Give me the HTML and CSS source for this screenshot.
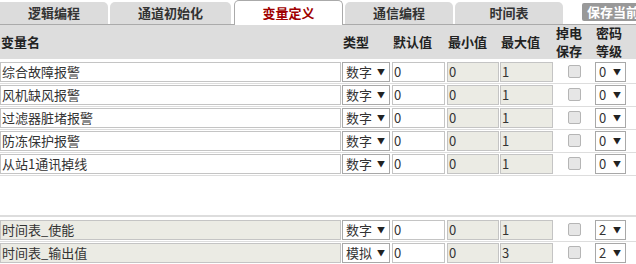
FILE: index.html
```html
<!DOCTYPE html>
<html>
<head>
    <link rel="stylesheet" href="styles.css">
</head>
<body>

    <nav class="tabs">
        <div class="tab first">逻辑编程</div>
        <div class="tab">通道初始化</div>
        <div class="tab active">变量定义</div>
        <div class="tab">通信编程</div>
        <div class="tab">时间表</div>
        <div class="save">保存当前设置</div>
    </nav>

    <div class="head">
        <div class="c-name">变量名</div>
        <div class="c-type">类型</div>
        <div class="c-def">默认值</div>
        <div class="c-min">最小值</div>
        <div class="c-max">最大值</div>
        <div class="c-chk">掉电<br>保存</div>
        <div class="c-lvl">密码<br>等级</div>
    </div>

    <section class="rows">
        <div class="row">
            <div class="c-name box">综合故障报警</div>
            <div class="c-type box sel">数字<span>▼</span></div>
            <div class="c-def box">0</div>
            <div class="c-min box off">0</div>
            <div class="c-max box off">1</div>
            <div class="c-chk"><span class="check"></span></div>
            <div class="c-lvl box sel">0<span>▼</span></div>
        </div>
        <div class="row">
            <div class="c-name box">风机缺风报警</div>
            <div class="c-type box sel">数字<span>▼</span></div>
            <div class="c-def box">0</div>
            <div class="c-min box off">0</div>
            <div class="c-max box off">1</div>
            <div class="c-chk"><span class="check"></span></div>
            <div class="c-lvl box sel">0<span>▼</span></div>
        </div>
        <div class="row">
            <div class="c-name box">过滤器脏堵报警</div>
            <div class="c-type box sel">数字<span>▼</span></div>
            <div class="c-def box">0</div>
            <div class="c-min box off">0</div>
            <div class="c-max box off">1</div>
            <div class="c-chk"><span class="check"></span></div>
            <div class="c-lvl box sel">0<span>▼</span></div>
        </div>
        <div class="row">
            <div class="c-name box">防冻保护报警</div>
            <div class="c-type box sel">数字<span>▼</span></div>
            <div class="c-def box">0</div>
            <div class="c-min box off">0</div>
            <div class="c-max box off">1</div>
            <div class="c-chk"><span class="check"></span></div>
            <div class="c-lvl box sel">0<span>▼</span></div>
        </div>
        <div class="row">
            <div class="c-name box">从站1通讯掉线</div>
            <div class="c-type box sel">数字<span>▼</span></div>
            <div class="c-def box">0</div>
            <div class="c-min box off">0</div>
            <div class="c-max box off">1</div>
            <div class="c-chk"><span class="check"></span></div>
            <div class="c-lvl box sel">0<span>▼</span></div>
        </div>
    </section>

    <section class="rows sys">
        <div class="row">
            <div class="c-name box off">时间表_使能</div>
            <div class="c-type box sel">数字<span>▼</span></div>
            <div class="c-def box">0</div>
            <div class="c-min box off">0</div>
            <div class="c-max box off">1</div>
            <div class="c-chk"><span class="check"></span></div>
            <div class="c-lvl box sel">2<span>▼</span></div>
        </div>
        <div class="row">
            <div class="c-name box off">时间表_输出值</div>
            <div class="c-type box sel">模拟<span>▼</span></div>
            <div class="c-def box">0</div>
            <div class="c-min box off">0</div>
            <div class="c-max box off">3</div>
            <div class="c-chk"><span class="check"></span></div>
            <div class="c-lvl box sel">2<span>▼</span></div>
        </div>
    </section>

</body>
</html>
```

FILE: styles.css
```css
html, body {
    overflow: hidden;
}

body {
    margin: 0;
    width: 636px;
    background-color: white;
    color: #333;
    font-family: "Noto Sans CJK SC", "Liberation Sans", sans-serif;
    font-size: 13px;
}

.tabs {
    display: flex;
    align-items: flex-end;
    height: 25px;
    border-bottom: 1px solid #aaa;
    box-sizing: border-box;
}

.tab {
    flex-shrink: 0;
    width: 108px;
    height: 22px;
    margin-right: 2px;
    background-color: #dcdcdc;
    border-top-right-radius: 5px;
    border-top-left-radius: 5px;
    text-align: center;
    font-weight: bold;
    line-height: 22px;
    color: #333;
}

.tab.first {
    border-top-left-radius: 0;
}

.tab:nth-child(2) {
    width: 121px;
    margin-right: 3px;
}

.tab.active {
    width: 107px;
    height: 24px;
    margin-bottom: -1px;
    background-color: white;
    border: 1px solid #aaa;
    border-bottom: none;
    color: #a00000;
    line-height: 24px;
}

.save {
    flex-shrink: 0;
    margin-left: 17px;
    align-self: flex-start;
    margin-top: 3px;
    height: 18px;
    padding: 0 5px;
    background-color: #999;
    color: white;
    font-weight: bold;
    line-height: 18px;
    border-radius: 2px;
    white-space: nowrap;
}

.head {
    display: flex;
    align-items: center;
    height: 34px;
    background-color: #dddddd;
    font-weight: bold;
    line-height: 18px;
    color: #222;
}

.head .c-name {
    padding-left: 1px;
}

.row {
    display: flex;
    align-items: center;
    height: 23px;
    border-bottom: 1px solid #ddd;
    box-sizing: border-box;
}

.rows {
    padding-top: 2px;
}

.rows.sys {
    margin-top: 39px;
    padding-top: 2px;
    border-top: 2px solid #ddd;
}

.c-name { flex-shrink: 0; width: 341px; margin-right: 1px; }
.c-type { flex-shrink: 0; width: 48px; margin-right: 2px; }
.c-def  { flex-shrink: 0; width: 53px; margin-right: 2px; }
.c-min  { flex-shrink: 0; width: 52px; margin-right: 1px; }
.c-max  { flex-shrink: 0; width: 53px; }
.c-chk  { flex-shrink: 0; width: 42px; text-align: center; }
.c-lvl  { flex-shrink: 0; width: 31px; }

.head .c-chk {
    text-align: left;
    padding-left: 2px;
    box-sizing: border-box;
}

.box {
    height: 20px;
    box-sizing: border-box;
    border: 1px solid #c4c4c4;
    background-color: white;
    line-height: 18px;
    padding-left: 1px;
    white-space: nowrap;
    overflow: hidden;
}

.box.off {
    background-color: #ebebe4;
}

.sel {
    border-color: #a8a8a8;
    padding-left: 3px;
    display: flex;
}

.sel span {
    margin-left: auto;
    font-size: 8px;
    padding-right: 4px;
    color: #222;
}

.check {
    display: inline-block;
    width: 11px;
    height: 11px;
    margin-top: 3px;
    background-color: #e6e6e6;
    border: 1px solid #b5b5b5;
    border-radius: 2px;
}
```
